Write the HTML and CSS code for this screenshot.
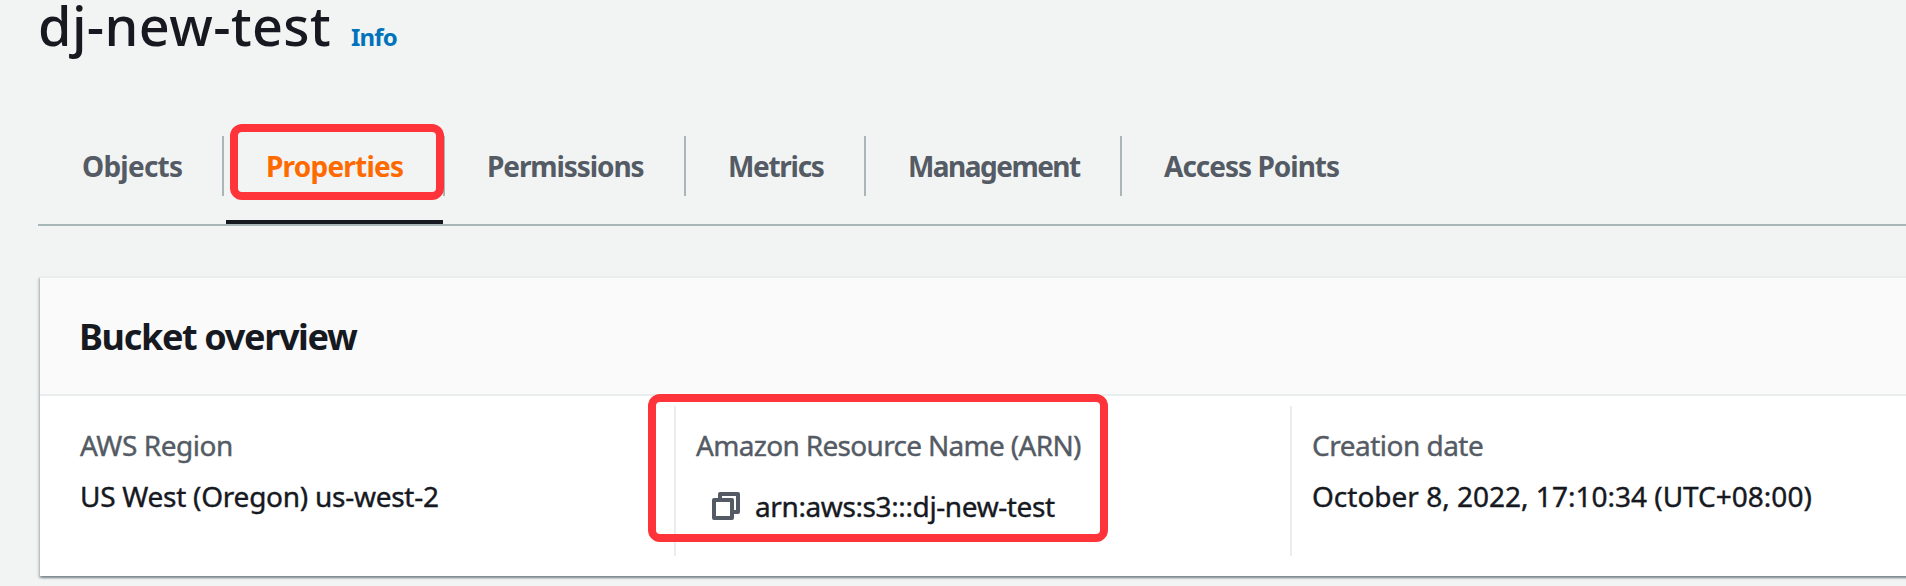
FILE: index.html
```
<!DOCTYPE html>
<html lang="en">
<head>
<meta charset="utf-8">
<title>dj-new-test - S3 bucket</title>
<link rel="stylesheet" href="styles.css">
</head>
<body>
<main class="page">
  <header class="page-header">
    <h1 class="title">dj-new-test</h1>
    <a class="info">Info</a>
  </header>
  <nav class="tabs">
    <a class="tab tab-objects">Objects</a>
    <a class="tab tab-properties active">Properties<span class="highlight highlight-tab"></span></a>
    <a class="tab tab-permissions">Permissions</a>
    <a class="tab tab-metrics">Metrics</a>
    <a class="tab tab-management">Management</a>
    <a class="tab tab-access">Access Points</a>
  </nav>
  <section class="card">
    <h2 class="card-header">Bucket overview</h2>
    <div class="card-body">
      <div class="column">
        <div class="label label-region">AWS Region</div>
        <div class="value value-region">US West (Oregon) us-west-2</div>
      </div>
      <div class="column">
        <div class="label label-arn">Amazon Resource Name (ARN)</div>
        <div class="value value-arn">
          <svg class="copy" viewBox="0 0 28 28" width="28" height="28" fill="none" stroke="#545b64" stroke-width="4" stroke-linejoin="round">
            <path d="M8 7V2H26V20H21"/>
            <rect x="2" y="8" width="18" height="18"/>
          </svg>
          <span>arn:aws:s3:::dj-new-test</span>
        </div>
        <span class="highlight highlight-arn"></span>
      </div>
      <div class="column">
        <div class="label label-date">Creation date</div>
        <div class="value value-date">October 8, 2022, 17:10:34 (UTC+08:00)</div>
      </div>
    </div>
  </section>
</main>
</body>
</html>
```
FILE: styles.css
```
* { box-sizing: border-box; }
body {
  margin: 0;
  height: 586px;
  overflow: hidden;
  background: #f2f4f4;
  color: #16191f;
  font: 28px/40px "Noto Sans", "Open Sans", sans-serif;
}
.page { padding-left: 38px; white-space: nowrap; }
.page-header { display: flex; align-items: baseline; height: 50px; }
.title {
  margin: 0;
  width: 313px;
  font-size: 54px;
  line-height: 50px;
  font-weight: 500;
  letter-spacing: 0.4px;
}
.info { font-size: 24px; line-height: 30px; font-weight: 700; letter-spacing: -0.8px; color: #0073bb; }

.tabs {
  display: grid;
  grid-template-columns: 186px 221px 241px 180px 256px 1fr;
  margin-top: 86px;
  height: 90px;
  border-bottom: 2px solid #aab7b8;
}
.tab {
  position: relative;
  height: 60px;
  padding: 10px 0 0 42px;
  border-right: 2px solid #aab7b8;
  font-weight: 700;
  color: #545b64;
}
.tab-objects { padding-left: 44px; letter-spacing: -0.75px; }
.tab-properties { letter-spacing: -0.78px; }
.tab-permissions { letter-spacing: -1.1px; }
.tab-metrics { letter-spacing: -1.3px; }
.tab-management { letter-spacing: -1.53px; }
.tab-access { letter-spacing: -1px; border-right: 0; }
.active { color: #ff6a00; }
.active::after {
  content: "";
  position: absolute;
  left: 2px;
  right: 0;
  top: 84px;
  height: 4px;
  background: #16191f;
}

.highlight {
  position: absolute;
  z-index: 1;
  border: 8px solid #ff343a;
  border-radius: 12px;
}
.highlight-tab { left: 6px; top: -12px; width: 214px; height: 76px; }
.highlight-arn { left: -28px; top: -12px; width: 460px; height: 148px; }

.card {
  margin: 50px -10px 0 2px;
  border-top: 2px solid #eaeded;
  background: #fff;
  box-shadow: 0 2px 2px 0 rgba(0, 28, 36, 0.3), 2px 2px 2px 0 rgba(0, 28, 36, 0.15), -2px 2px 2px 0 rgba(0, 28, 36, 0.15);
}
.card-header {
  margin: 0;
  padding: 37px 39px 35px;
  height: 118px;
  border-bottom: 2px solid #eaeded;
  background: #fafafa;
  font-size: 36px;
  line-height: 44px;
  font-weight: 700;
  letter-spacing: -1.34px;
}
.card-body {
  display: grid;
  grid-template-columns: repeat(3, 616px);
  padding: 10px 0 20px 18px;
}
.column {
  position: relative;
  height: 150px;
  padding: 19px 0 0 20px;
  border-left: 2px solid #eaeded;
}
.column:first-child { padding-left: 22px; border-left: 0; }
.label, .value { -webkit-text-stroke: 0.4px currentColor; }
.label { color: #545b64; }
.label-region { letter-spacing: -0.45px; }
.label-arn { letter-spacing: -0.68px; }
.label-date { letter-spacing: -0.51px; }
.value { margin-top: 11px; }
.value-region { letter-spacing: -0.26px; }
.value-arn {
  display: flex;
  align-items: center;
  gap: 15px;
  margin-top: 21px;
  padding-left: 16px;
  letter-spacing: -0.39px;
}
.value-date { letter-spacing: 0; }
.copy { display: block; }
```
